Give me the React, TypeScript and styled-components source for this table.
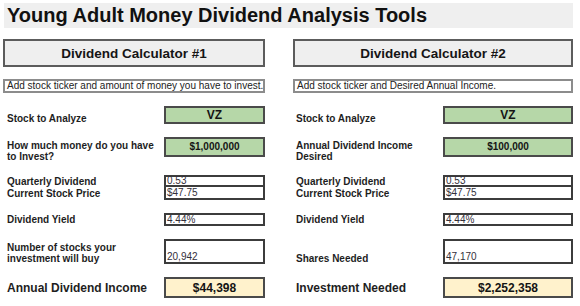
import React from 'react';
import styled, { createGlobalStyle } from 'styled-components';

const Global = createGlobalStyle`
  html, body { margin: 0; padding: 0; background: #ffffff; }
  body { font-family: "Liberation Sans", Arial, sans-serif; color: #1c1c1c; }
  #root { width: 580px; height: 306px; }
`;

const Page = styled.div`
  width: 580px;
  height: 306px;
  box-sizing: border-box;
  padding: 3px 0 0 3px;
  overflow: hidden;
`;

const TitleBar = styled.h1`
  margin: 0 0 0 1px;
  width: 569px;
  height: 25px;
  box-sizing: border-box;
  padding-left: 3px;
  background: #efefef;
  font-size: 20px;
  font-weight: 700;
  line-height: 25px;
  color: #111;
  white-space: nowrap;
`;

const Columns = styled.div`
  display: flex;
  gap: 28px;
  margin-top: 11px;
`;

const Panel = styled.section<{ $w: number }>`
  width: ${(p) => p.$w}px;
  display: flex;
  flex-direction: column;
`;

const PanelHeader = styled.div`
  height: 28px;
  box-sizing: border-box;
  border: 2px solid #5c5c5c;
  background: #efefef;
  display: flex;
  align-items: center;
  justify-content: center;
  font-size: 13.5px;
  font-weight: 700;
  color: #151515;
`;

const Instruction = styled.div`
  margin-top: 12px;
  height: 14px;
  box-sizing: border-box;
  border: 2px solid #8c8c8c;
  padding-left: 2px;
  font-size: 10px;
  line-height: 10px;
  color: #222;
  white-space: nowrap;
  overflow: hidden;
`;

const Row = styled.div<{ $h: number; $gap: number; $align: string }>`
  display: flex;
  height: ${(p) => p.$h}px;
  margin-top: ${(p) => p.$gap}px;
  align-items: ${(p) => p.$align};
`;

const Label = styled.div<{ $pad: number; $big?: boolean; $top?: number }>`
  flex: 1;
  padding-left: ${(p) => p.$pad}px;
  padding-top: ${(p) => p.$top ?? 0}px;
  font-size: ${(p) => (p.$big ? 12 : 10)}px;
  font-weight: 700;
  line-height: ${(p) => (p.$big ? 14 : 11)}px;
  color: #1e1e1e;
  align-self: ${(p) => (p.$top !== undefined ? 'flex-start' : 'auto')};
`;

type Tone = 'input' | 'plain' | 'result';

const toneBg: Record<Tone, string> = {
  input: '#b6d7a8',
  plain: '#ffffff',
  result: '#fff2cc',
};

const ValueBox = styled.div<{
  $w: number;
  $tone: Tone;
  $size: number;
  $joinTop?: boolean;
  $bottom?: boolean;
}>`
  width: ${(p) => p.$w}px;
  height: 100%;
  box-sizing: border-box;
  border: 2px solid ${(p) => (p.$tone === 'plain' ? '#3c3c3c' : '#4a4a4a')};
  border-top-width: ${(p) => (p.$joinTop ? 0 : 2)}px;
  background: ${(p) => toneBg[p.$tone]};
  display: flex;
  align-items: ${(p) => (p.$bottom ? 'flex-end' : 'center')};
  justify-content: ${(p) => (p.$tone === 'plain' ? 'flex-start' : 'center')};
  padding-left: ${(p) => (p.$tone === 'plain' ? 1 : 0)}px;
  font-size: ${(p) => p.$size}px;
  font-weight: ${(p) => (p.$tone === 'plain' ? 400 : 700)};
  line-height: 10px;
  color: ${(p) => (p.$tone === 'plain' ? '#34303a' : '#141414')};
  white-space: nowrap;
`;

type RowSpec = {
  label: React.ReactNode;
  value: string;
  tone: Tone;
  h: number;
  gap: number;
  align?: string;
  labelTop?: number;
  size?: number;
  joinTop?: boolean;
  bottom?: boolean;
  big?: boolean;
};

type PanelSpec = {
  width: number;
  valueWidth: number;
  pad: number;
  title: string;
  note: string;
  rows: RowSpec[];
};

const commonRows = (moneyLabel: React.ReactNode, moneyValue: string): RowSpec[] => [
  { label: 'Stock to Analyze', value: 'VZ', tone: 'input', h: 18, gap: 13, align: 'flex-end', size: 12 },
  { label: moneyLabel, value: moneyValue, tone: 'input', h: 20, gap: 13, labelTop: 3, size: 10 },
  { label: 'Quarterly Dividend', value: '0.53', tone: 'plain', h: 12, gap: 18, size: 10 },
  { label: 'Current Stock Price', value: '$47.75', tone: 'plain', h: 13, gap: 0, size: 10, joinTop: true },
  { label: 'Dividend Yield', value: '4.44%', tone: 'plain', h: 13, gap: 13, size: 10 },
];

const panels: PanelSpec[] = [
  {
    width: 262,
    valueWidth: 101,
    pad: 4,
    title: 'Dividend Calculator #1',
    note: 'Add stock ticker and amount of money you have to invest.',
    rows: [
      ...commonRows(
        <>
          How much money do you have
          <br />
          to Invest?
        </>,
        '$1,000,000'
      ),
      {
        label: (
          <>
            Number of stocks your
            <br />
            investment will buy
          </>
        ),
        value: '20,942',
        tone: 'plain',
        h: 25,
        gap: 13,
        labelTop: 3,
        size: 10,
        bottom: true,
      },
      { label: 'Annual Dividend Income', value: '$44,398', tone: 'result', h: 21, gap: 13, size: 12, big: true },
    ],
  },
  {
    width: 280,
    valueWidth: 130,
    pad: 3,
    title: 'Dividend Calculator #2',
    note: 'Add stock ticker and Desired Annual Income.',
    rows: [
      ...commonRows(
        <>
          Annual Dividend Income
          <br />
          Desired
        </>,
        '$100,000'
      ),
      { label: 'Shares Needed', value: '47,170', tone: 'plain', h: 25, gap: 13, align: 'flex-end', size: 10, bottom: true },
      { label: 'Investment Needed', value: '$2,252,358', tone: 'result', h: 21, gap: 13, size: 12, big: true },
    ],
  },
];

const Calculator: React.FC<{ spec: PanelSpec }> = ({ spec }) => (
  <Panel $w={spec.width}>
    <PanelHeader>{spec.title}</PanelHeader>
    <Instruction>{spec.note}</Instruction>
    {spec.rows.map((r, i) => (
      <Row key={i} $h={r.h} $gap={r.gap} $align={r.align ?? 'center'}>
        <Label $pad={spec.pad} $big={r.big} $top={r.labelTop}>
          {r.label}
        </Label>
        <ValueBox
          $w={spec.valueWidth}
          $tone={r.tone}
          $size={r.size ?? 10}
          $joinTop={r.joinTop}
          $bottom={r.bottom}
        >
          {r.value}
        </ValueBox>
      </Row>
    ))}
  </Panel>
);

export default function App() {
  return (
    <>
      <Global />
      <Page>
        <TitleBar>Young Adult Money Dividend Analysis Tools</TitleBar>
        <Columns>
          {panels.map((p) => (
            <Calculator key={p.title} spec={p} />
          ))}
        </Columns>
      </Page>
    </>
  );
}
